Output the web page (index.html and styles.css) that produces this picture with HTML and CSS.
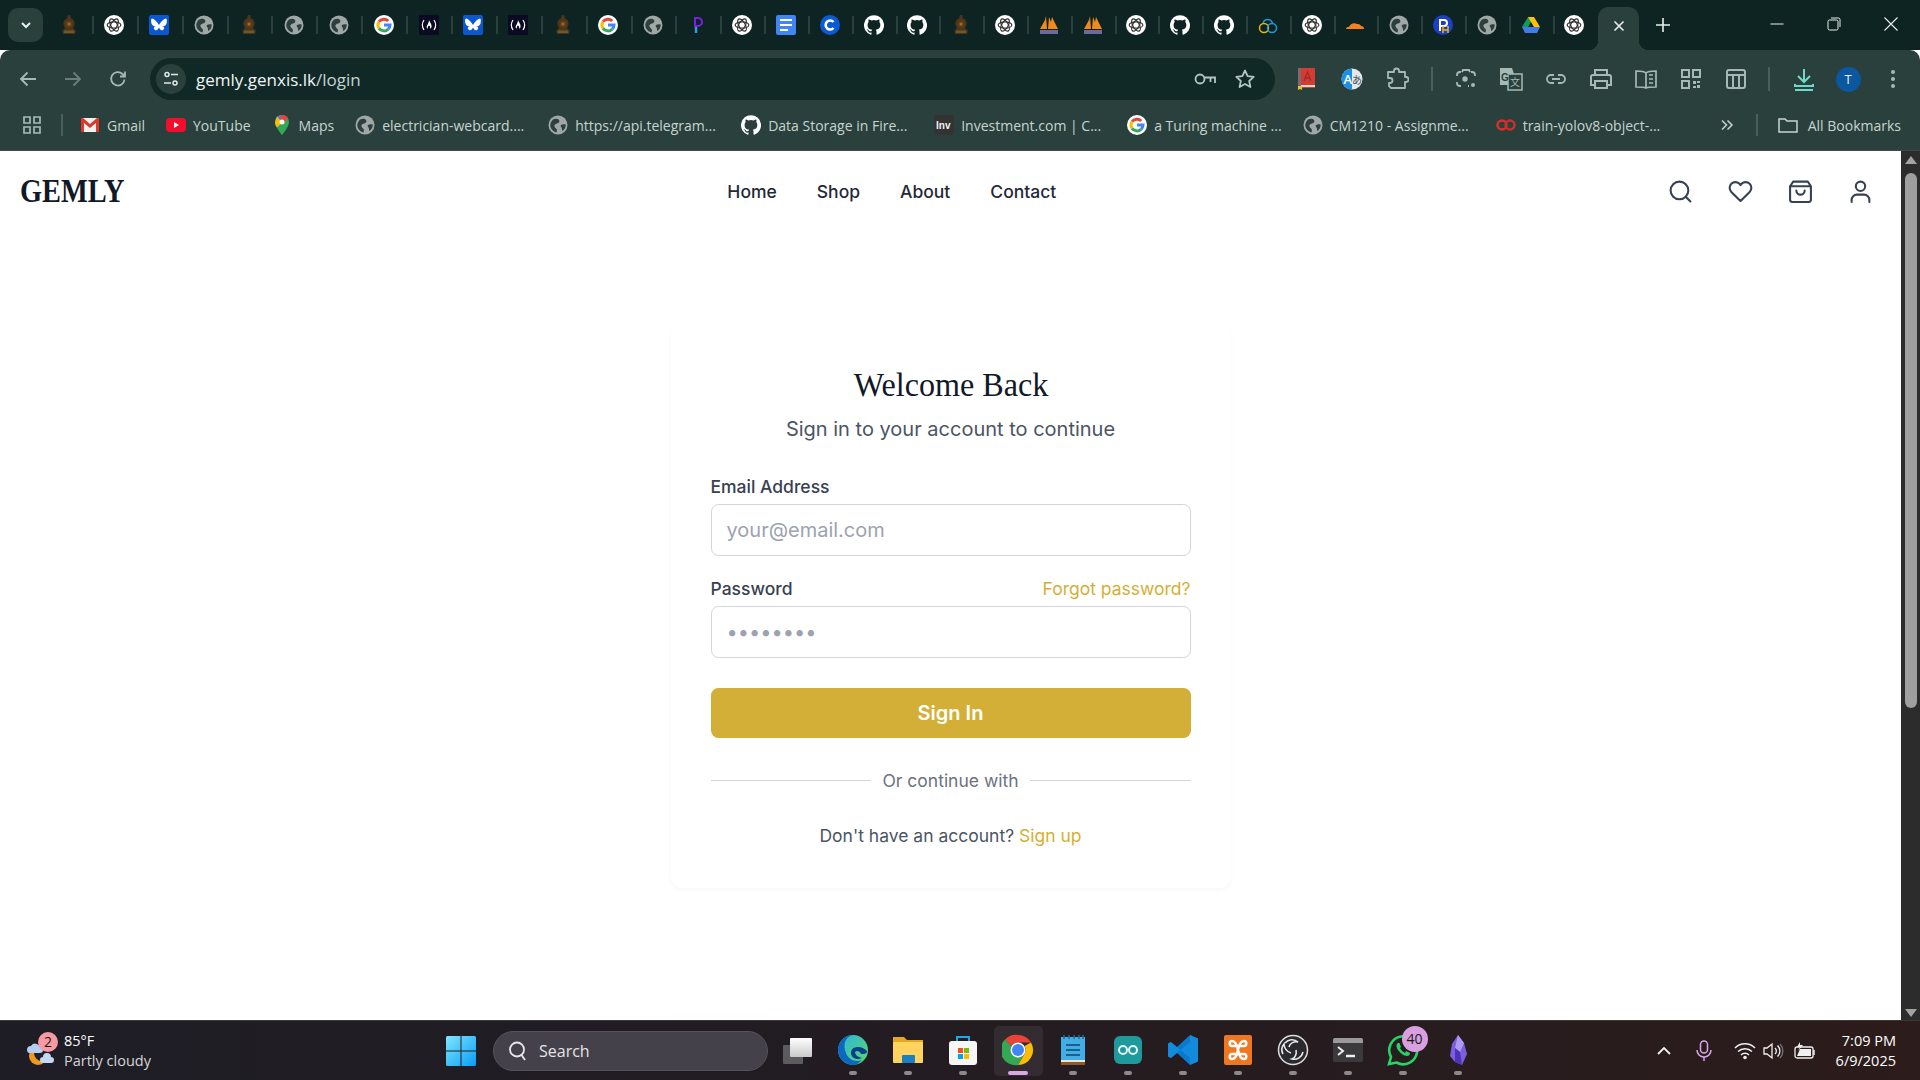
FILE: index.html
```html
<!DOCTYPE html>
<html lang="en">

<head>
    <meta charset="UTF-8">
    <meta name="viewport" content="width=device-width, initial-scale=1.0">
    <title>Gemly - Login</title>
    <link rel="stylesheet" href="styles.css">
</head>

<body>
    <!-- shared favicons -->
    <svg class="sprites" aria-hidden="true">
        <symbol id="f-globe" viewBox="0 0 20 20">
            <circle cx="10" cy="10" r="9.500" fill="#a0a7a7" />
            <path d="M5 4.500c2-1 5-1 6 .5s0 3-2 3.500-3 1.500-2.500 3 2 2 2.500 3.500l-.5 2.500C5 16.500 2.500 13.500 2.300 10.500 2.200 8 3.500 6 5 4.500zM13 10c1-.8 3-1 4.700-.6.2 2.500-1 5-3.500 6.600-.3-1.500 0-2.500-.7-3.500s-1.200-1.800-.5-2.500z" fill="#2d3f3f" />
        </symbol>
        <symbol id="f-gpt" viewBox="0 0 20 20">
            <circle cx="10" cy="10" r="10" fill="#fff" />
            <g fill="none" stroke="#333" stroke-width="1.200">
                <ellipse cx="10" cy="10" rx="6.800" ry="3.200" />
                <ellipse cx="10" cy="10" rx="6.800" ry="3.200" transform="rotate(60 10 10)" />
                <ellipse cx="10" cy="10" rx="6.800" ry="3.200" transform="rotate(120 10 10)" />
            </g>
        </symbol>
        <symbol id="f-kite" viewBox="0 0 20 20">
            <rect width="20" height="20" rx="2" fill="#0b57d0" />
            <path d="M3 3.500c2 0 5 3 7 6.500 2-3.500 5-6.500 7-6.500 1 0 1 3 .5 5-.5 2-2.500 3-4.500 2.500 2 .5 3 2 1.500 3.500-2 2-3.500 0-4.500-2-1 2-2.500 4-4.500 2-1.500-1.500-.5-3 1.500-3.500-2 .5-4-.5-4.500-2.500-.5-2-.5-5 .5-5z" fill="#fff" />
        </symbol>
        <symbol id="f-emblem" viewBox="0 0 20 20">
            <path d="M10 0c1.500 0 2 1.500 1.500 3 3 1 4.500 4 4 7l-1.500 3 3 3-1 3H4l-1-3 3-3-1.500-3C4 7 5.500 4 8.500 3 8 1.500 8.500 0 10 0z" fill="#4a361c" />
            <circle cx="10" cy="9" r="3.500" fill="#5e3d18" />
            <circle cx="10" cy="9" r="1.500" fill="#a8691f" />
            <path d="M5 15.500h10V18H5z" fill="#6d5a26" />
        </symbol>
        <symbol id="f-google" viewBox="0 0 20 20">
            <circle cx="10" cy="10" r="10" fill="#fff" />
            <g fill="none" stroke-width="3">
                <path d="M14.200 6A6 6 0 0 0 5 6.700" stroke="#ea4335" />
                <path d="M5 6.700a6 6 0 0 0 0 6.600" stroke="#fbbc05" />
                <path d="M5 13.300a6 6 0 0 0 9 1" stroke="#34a853" />
                <path d="M14 14.300a6 6 0 0 0 2-4.300h-6" stroke="#4285f4" />
            </g>
        </symbol>
        <symbol id="f-fcc" viewBox="0 0 20 20">
            <rect width="20" height="20" fill="#0a0a23" />
            <g fill="none" stroke="#fff" stroke-width="1.200">
                <path d="M5 5c-2 3-2 7 0 10M15 5c2 3 2 7 0 10" />
            </g>
            <path d="M10 5c.5 2 3 4 2.500 7-.3 1-1 1.500-1.500 1.500.5-1 0-2.500-1-3-1 .5-1.500 2-1 3-.7 0-1.400-.7-1.500-1.500C8 10 10 8 10 5z" fill="#fff" />
        </symbol>
        <symbol id="f-github" viewBox="0 0 24 24">
            <path d="M12 .3a12 12 0 0 0-3.800 23.400c.6.1.8-.3.8-.6v-2c-3.300.7-4-1.600-4-1.600-.6-1.400-1.400-1.800-1.400-1.800-1-.7.1-.7.1-.7 1.200 0 1.900 1.200 1.900 1.200 1 1.800 2.800 1.300 3.500 1 0-.8.4-1.300.7-1.600-2.700-.3-5.500-1.300-5.500-6 0-1.200.5-2.300 1.300-3.100-.2-.4-.6-1.600 0-3.200 0 0 1-.3 3.400 1.200a11.500 11.500 0 0 1 6 0c2.300-1.500 3.300-1.200 3.300-1.200.6 1.600.2 2.800 0 3.200.9.8 1.300 1.900 1.300 3.200 0 4.600-2.800 5.600-5.500 5.900.5.4.9 1 .9 2.200v3.300c0 .3.1.7.8.6A12 12 0 0 0 12 .3" fill="#fff" />
        </symbol>
        <symbol id="f-purple" viewBox="0 0 20 20">
            <path d="M7 3h3a3.500 3.500 0 0 1 0 8H7z" fill="none" stroke="#7c1fe0" stroke-width="2" />
            <path d="M8 12v6" stroke="#2a9fd8" stroke-width="2.500" />
        </symbol>
        <symbol id="f-docs" viewBox="0 0 20 20">
            <rect width="20" height="20" rx="2" fill="#4285f4" />
            <path d="M4 5h12M4 10h12M4 15h8" stroke="#fff" stroke-width="2" />
        </symbol>
        <symbol id="f-c" viewBox="0 0 20 20">
            <circle cx="10" cy="10" r="10" fill="#0b5ad4" />
            <path d="M13.500 7A4.500 4.500 0 1 0 13.500 13" fill="none" stroke="#fff" stroke-width="2.600" />
        </symbol>
        <symbol id="f-pma" viewBox="0 0 20 20">
            <path d="M1 14 6 5l1-4 1 13zM9 14l1-12 2 5 1-5 6 12z" fill="#f08a1d" />
            <path d="M1 15h18v4H1z" fill="#6c6a9a" />
        </symbol>
        <symbol id="f-cloud" viewBox="0 0 20 20">
            <circle cx="6" cy="13" r="4.500" fill="none" stroke="#f5b400" stroke-width="1.500" />
            <circle cx="14" cy="13" r="4.500" fill="none" stroke="#1d9be0" stroke-width="1.500" />
            <path d="M5 8a5 5 0 0 1 9.500 0" fill="none" stroke="#1d9be0" stroke-width="1.500" />
        </symbol>
        <symbol id="f-flare" viewBox="0 0 20 20">
            <path d="M1 14c0-2 2-2 3-2 1-3 5-5 8-3 1 0 3 0 4 2 2 0 3 1 3 3z" fill="#f48120" />
        </symbol>
        <symbol id="f-ph" viewBox="0 0 20 20">
            <circle cx="10" cy="10" r="10" fill="#1c3fc4" />
            <path d="M7 16V5h4a3 3 0 0 1 0 6H7" fill="none" stroke="#fff" stroke-width="2" />
            <path d="M10 11v7M15 11v7M10 15h5" stroke="#f5b400" stroke-width="1.500" />
        </symbol>
        <symbol id="f-drive" viewBox="0 0 20 20">
            <path d="M7 2h6L7 12H1z" fill="#0f9d58" />
            <path d="M13 2l6 10h-6L7 2z" fill="#ffc107" />
            <path d="M1 12h18l-3 6H4z" fill="#3f7ee8" />
        </symbol>
    </svg>

    <div class="tabstrip">
        <button class="tab-menu">
            <svg width="14" height="14" viewBox="0 0 14 14"><path d="M3 5l4 4 4-4" fill="none" stroke="#e8f0ee" stroke-width="2" /></svg>
        </button>
        <div class="tabs">
            <div class="tab tab-first"><svg class="fav"><use href="#f-emblem" /></svg></div>
            <div class="tab"><svg class="fav"><use href="#f-gpt" /></svg></div>
            <div class="tab"><svg class="fav"><use href="#f-kite" /></svg></div>
            <div class="tab"><svg class="fav"><use href="#f-globe" /></svg></div>
            <div class="tab"><svg class="fav"><use href="#f-emblem" /></svg></div>
            <div class="tab"><svg class="fav"><use href="#f-globe" /></svg></div>
            <div class="tab"><svg class="fav"><use href="#f-globe" /></svg></div>
            <div class="tab"><svg class="fav"><use href="#f-google" /></svg></div>
            <div class="tab"><svg class="fav"><use href="#f-fcc" /></svg></div>
            <div class="tab"><svg class="fav"><use href="#f-kite" /></svg></div>
            <div class="tab"><svg class="fav"><use href="#f-fcc" /></svg></div>
            <div class="tab"><svg class="fav"><use href="#f-emblem" /></svg></div>
            <div class="tab"><svg class="fav"><use href="#f-google" /></svg></div>
            <div class="tab"><svg class="fav"><use href="#f-globe" /></svg></div>
            <div class="tab"><svg class="fav"><use href="#f-purple" /></svg></div>
            <div class="tab"><svg class="fav"><use href="#f-gpt" /></svg></div>
            <div class="tab"><svg class="fav"><use href="#f-docs" /></svg></div>
            <div class="tab"><svg class="fav"><use href="#f-c" /></svg></div>
            <div class="tab"><svg class="fav"><use href="#f-github" /></svg></div>
            <div class="tab"><svg class="fav"><use href="#f-github" /></svg></div>
            <div class="tab"><svg class="fav"><use href="#f-emblem" /></svg></div>
            <div class="tab"><svg class="fav"><use href="#f-gpt" /></svg></div>
            <div class="tab"><svg class="fav"><use href="#f-pma" /></svg></div>
            <div class="tab"><svg class="fav"><use href="#f-pma" /></svg></div>
            <div class="tab"><svg class="fav"><use href="#f-gpt" /></svg></div>
            <div class="tab"><svg class="fav"><use href="#f-github" /></svg></div>
            <div class="tab"><svg class="fav"><use href="#f-github" /></svg></div>
            <div class="tab"><svg class="fav"><use href="#f-cloud" /></svg></div>
            <div class="tab"><svg class="fav"><use href="#f-gpt" /></svg></div>
            <div class="tab"><svg class="fav"><use href="#f-flare" /></svg></div>
            <div class="tab"><svg class="fav"><use href="#f-globe" /></svg></div>
            <div class="tab"><svg class="fav"><use href="#f-ph" /></svg></div>
            <div class="tab"><svg class="fav"><use href="#f-globe" /></svg></div>
            <div class="tab"><svg class="fav"><use href="#f-drive" /></svg></div>
            <div class="tab"><svg class="fav"><use href="#f-gpt" /></svg></div>
            <div class="tab-active">
                <svg width="14" height="14" viewBox="0 0 14 14"><path d="M2.500 2.500l9 9M11.500 2.500l-9 9" stroke="#e8f0ee" stroke-width="1.600" /></svg>
            </div>
            <div class="tab-new">
                <svg width="16" height="16" viewBox="0 0 16 16"><path d="M8 1v14M1 8h14" stroke="#e8f0ee" stroke-width="1.600" /></svg>
            </div>
        </div>
        <div class="win-controls">
            <svg width="16" height="16" viewBox="0 0 16 16"><path d="M1.500 8h13" stroke="#e8f0ee" stroke-width="1" /></svg>
            <svg width="16" height="16" viewBox="0 0 16 16"><rect x="2" y="4" width="10" height="10" rx="1.500" fill="none" stroke="#e8f0ee" /><path d="M5 2h7.500A1.500 1.500 0 0 1 14 3.500V11" fill="none" stroke="#e8f0ee" /></svg>
            <svg width="16" height="16" viewBox="0 0 16 16"><path d="M1.500 1.500l13 13M14.500 1.500l-13 13" stroke="#e8f0ee" stroke-width="1.100" /></svg>
        </div>
    </div>

    <div class="toolbar">
        <div class="nav-row">
            <span class="tool"><svg width="20" height="20" viewBox="0 0 20 20"><path d="M18 10H3M9.500 3.500 3 10l6.500 6.500" fill="none" stroke="currentColor" stroke-width="1.800" /></svg></span>
            <span class="tool tool-off"><svg width="20" height="20" viewBox="0 0 20 20"><path d="M2 10h15M10.500 3.500 17 10l-6.500 6.500" fill="none" stroke="currentColor" stroke-width="1.800" /></svg></span>
            <span class="tool"><svg width="20" height="20" viewBox="0 0 20 20"><path d="M16.500 10.500A6.700 6.700 0 1 1 14.500 5L17 7.500M17 2.500v5h-5" fill="none" stroke="currentColor" stroke-width="1.800" /></svg></span>
            <div class="address">
                <span class="site-info">
                    <svg width="18" height="18" viewBox="0 0 18 18"><circle cx="5" cy="4.500" r="2" fill="none" stroke="#dfe9e6" stroke-width="1.500" /><path d="M9 4.500h7M2 13h7" stroke="#dfe9e6" stroke-width="1.500" /><circle cx="13" cy="13" r="2" fill="none" stroke="#dfe9e6" stroke-width="1.500" /></svg>
                </span>
                <span class="url">gemly.genxis.lk<span class="url-path">/login</span></span>
                <span class="address-icons">
                    <svg width="24" height="24" viewBox="0 0 24 24"><circle cx="7" cy="12" r="4.500" fill="none" stroke="currentColor" stroke-width="1.800" /><path d="M11.500 10.500H22V16M17.500 10.500V15" fill="none" stroke="currentColor" stroke-width="1.800" /></svg>
                    <svg width="24" height="24" viewBox="0 0 24 24"><path d="m12 3.500 2.600 5.600 6.100.7-4.500 4.200 1.200 6L12 17l-5.400 3 1.200-6-4.500-4.200 6.100-.7z" fill="none" stroke="currentColor" stroke-width="1.800" stroke-linejoin="round" /></svg>
                </span>
            </div>
            <span class="tool tool-first"><svg width="24" height="24" viewBox="0 0 24 24"><rect x="3" y="1" width="17" height="20" fill="#d23c35" /><rect x="3" y="1" width="3" height="20" fill="#7d6b6b" /><path d="M6 18h14v2H6z" fill="#e6dcc8" /><path d="M3 19h4v4l-2-1-2 1z" fill="#e8c22c" /><path d="M9 14l3.500-9 3.500 9M10.200 11h4.600" fill="none" stroke="#a02a25" stroke-width="1.300" /></svg></span>
            <span class="tool"><svg width="24" height="24" viewBox="0 0 24 24"><circle cx="12" cy="12" r="10.500" fill="#e4e8e8" /><path d="M12 1.500a10.500 10.500 0 0 0 0 21z" fill="#1a8fe8" /><text x="3.500" y="17" class="glyph-a">A</text><text x="12" y="17" class="glyph-j">あ</text></svg></span>
            <span class="tool"><svg width="24" height="24" viewBox="0 0 24 24"><path d="M3 5h6V4a2.500 2.500 0 0 1 5 0v1h6v5h1a2.500 2.500 0 0 1 0 5h-1v6H6l-2-2v-3h1a2.500 2.500 0 0 0 0-5H3z" fill="none" stroke="currentColor" stroke-width="1.800" stroke-linejoin="round" /></svg></span>
            <span class="tool-sep"></span>
            <span class="tool"><svg width="24" height="24" viewBox="0 0 24 24"><path d="M7 5H6a3 3 0 0 0-3 3v1M3 15v1a3 3 0 0 0 3 3h1M17 5h1a3 3 0 0 1 3 3v1M14 19h1M8 5l1-2h6l1 2" fill="none" stroke="currentColor" stroke-width="1.800" /><circle cx="11" cy="12" r="2.700" fill="currentColor" /><circle cx="19" cy="18" r="2" fill="currentColor" /></svg></span>
            <span class="tool"><svg width="24" height="24" viewBox="0 0 24 24"><path d="M1 1h12l2 6v11H1z" fill="currentColor" /><rect x="9" y="7" width="14" height="16" fill="#2a403c" stroke="currentColor" stroke-width="1.500" /><text x="2" y="14" class="glyph-g">G</text><text x="11" y="19" class="glyph-t">文</text></svg></span>
            <span class="tool"><svg width="24" height="24" viewBox="0 0 24 24"><path d="M10 8H7a4 4 0 0 0 0 8h3M14 8h3a4 4 0 0 1 0 8h-3M8 12h8" fill="none" stroke="currentColor" stroke-width="1.800" /></svg></span>
            <span class="tool"><svg width="24" height="24" viewBox="0 0 24 24"><path d="M6 8V3h12v5M6 18H2v-8a2 2 0 0 1 2-2h16a2 2 0 0 1 2 2v8h-4M6 14h12v7H6z" fill="none" stroke="currentColor" stroke-width="2" /></svg></span>
            <span class="tool"><svg width="24" height="24" viewBox="0 0 24 24"><path d="M12 6c-2-2-5-2-10-2v16c5 0 8 0 10 1 2-1 5-1 10-1V4c-5 0-8 0-10 2zM12 6v15M15 8h4M15 12h4M15 16h4" fill="none" stroke="currentColor" stroke-width="1.700" /></svg></span>
            <span class="tool"><svg width="24" height="24" viewBox="0 0 24 24"><path d="M3 3h7v7H3zM14 3h7v7h-7zM3 14h7v7H3z" fill="none" stroke="currentColor" stroke-width="2" /><path d="M14 14h3v3h-3zM18 18h3v3h-3zM18 14h3v2h-3zM14 19h3v2h-3z" fill="currentColor" /></svg></span>
            <span class="tool"><svg width="24" height="24" viewBox="0 0 24 24"><rect x="3" y="3" width="18" height="18" rx="2" fill="none" stroke="currentColor" stroke-width="2" /><path d="M3 8h18M9 8v13M15 8v13" fill="none" stroke="currentColor" stroke-width="2" /></svg></span>
            <span class="tool-sep tool-sep-last"></span>
            <span class="tool tool-dl"><svg width="24" height="24" viewBox="0 0 24 24"><path d="M12 2v12M6 9l6 6 6-6M3 17v2h18v-2" fill="none" stroke="currentColor" stroke-width="2" /><path d="M3 23h18" stroke="currentColor" stroke-width="2" /></svg></span>
            <span class="tool"><span class="avatar">T</span></span>
            <span class="tool"><svg width="24" height="24" viewBox="0 0 24 24"><circle cx="12" cy="5" r="2" fill="currentColor" /><circle cx="12" cy="12" r="2" fill="currentColor" /><circle cx="12" cy="19" r="2" fill="currentColor" /></svg></span>
        </div>

        <div class="bookmarks">
            <span class="apps-btn"><svg width="20" height="20" viewBox="0 0 20 20"><path d="M2 2h6v6H2zM12 2h6v6h-6zM2 12h6v6H2zM12 12h6v6h-6z" fill="none" stroke="currentColor" stroke-width="1.700" /></svg></span>
            <span class="bm-sep"></span>
            <a class="bm"><svg class="fav" viewBox="0 0 20 20"><rect x="1" y="3" width="18" height="14" fill="#f4f0ee" /><path d="M1 3v14h3V8l6 5 6-5v9h3V3h-2l-7 6-7-6z" fill="#d93a2c" /></svg>Gmail</a>
            <a class="bm"><svg class="fav" viewBox="0 0 20 20"><rect y="3" width="20" height="14" rx="4" fill="#f40d2c" /><path d="M8 7l5 3-5 3z" fill="#fff" /></svg>YouTube</a>
            <a class="bm"><svg class="fav" viewBox="0 0 20 20"><path d="M10 0a7 7 0 0 0-7 7c0 5 7 13 7 13s7-8 7-13a7 7 0 0 0-7-7z" fill="#34a853" /><path d="M10 0a7 7 0 0 1 6 3.500L5 12.500C4 11 3 9 3 7a7 7 0 0 1 7-7z" fill="#4285f4" /><path d="M5 1.500 3 7c0 2 1 4 2 5.500l5-5z" fill="#fbbc05" /><path d="M10 0c2 0 5 1 6 3.500L12 7 7 2z" fill="#ea4335" /><circle cx="10" cy="7" r="2.500" fill="#fff" /></svg>Maps</a>
            <a class="bm bm-long"><svg class="fav"><use href="#f-globe" /></svg>electrician-webcard....</a>
            <a class="bm bm-long"><svg class="fav"><use href="#f-globe" /></svg>https://api.telegram...</a>
            <a class="bm bm-long"><svg class="fav"><use href="#f-github" /></svg>Data Storage in Fire...</a>
            <a class="bm bm-long"><svg class="fav" viewBox="0 0 20 20"><rect width="20" height="20" fill="#333" /><text x="2" y="14" class="glyph-inv">Inv</text></svg>Investment.com | C...</a>
            <a class="bm"><svg class="fav"><use href="#f-google" /></svg>a Turing machine ...</a>
            <a class="bm bm-long"><svg class="fav"><use href="#f-globe" /></svg>CM1210 - Assignme...</a>
            <a class="bm bm-long"><svg class="fav" viewBox="0 0 20 20"><circle cx="6" cy="10" r="4.500" fill="none" stroke="#d9302a" stroke-width="2.500" /><circle cx="14" cy="10" r="4.500" fill="none" stroke="#c9302a" stroke-width="2.500" /></svg>train-yolov8-object-...</a>
            <span class="bm-more">
                <svg width="14" height="14" viewBox="0 0 14 14"><path d="M2 2.500 6.500 7 2 11.500M7.500 2.500 12 7l-4.500 4.500" fill="none" stroke="currentColor" stroke-width="1.500" /></svg>
            </span>
            <span class="bm-sep bm-sep-end"></span>
            <a class="bm bm-all"><svg class="fav" viewBox="0 0 20 20"><path d="M1 4h6l2 2h10v11H1z" fill="none" stroke="currentColor" stroke-width="1.500" /></svg>All Bookmarks</a>
        </div>
    </div>

    <div class="viewport">
        <div class="site">
            <header class="site-header">
                <a class="logo">GEMLY</a>
                <nav class="site-nav">
                    <a>Home</a>
                    <a>Shop</a>
                    <a>About</a>
                    <a>Contact</a>
                </nav>
                <div class="site-icons">
                    <svg viewBox="0 0 24 24"><circle cx="11" cy="11" r="8.500" /><path d="m21.500 21.500-4.500-4.500" /></svg>
                    <svg viewBox="0 0 24 24"><path d="M20.800 4.600a5.500 5.500 0 0 0-7.800 0L12 5.700l-1-1.100a5.500 5.500 0 0 0-7.800 7.800L12 21.200l8.800-8.800a5.500 5.500 0 0 0 0-7.800z" /></svg>
                    <svg viewBox="0 0 24 24"><path d="M5 2.500h14L22 7v13a2 2 0 0 1-2 2H4a2 2 0 0 1-2-2V7zM2 7h20M16 11a4 4 0 0 1-8 0" /></svg>
                    <svg viewBox="0 0 24 24"><circle cx="12" cy="7" r="4.500" /><path d="M3.500 22v-2a5 5 0 0 1 5-5h7a5 5 0 0 1 5 5v2" /></svg>
                </div>
            </header>

            <main class="login-card">
                <h1 class="login-title">Welcome Back</h1>
                <p class="login-sub">Sign in to your account to continue</p>

                <label class="field-label" for="email">Email Address</label>
                <input class="field-input" type="email" id="email" placeholder="your@email.com">

                <div class="label-row">
                    <label class="field-label" for="password">Password</label>
                    <a class="gold-link">Forgot password?</a>
                </div>
                <input class="field-input field-pass" type="password" id="password" placeholder="••••••••">

                <button class="signin-btn">Sign In</button>

                <div class="divider"><span>Or continue with</span></div>

                <p class="signup-line">Don't have an account? <a class="gold-link">Sign up</a></p>
            </main>
        </div>
        <div class="scrollbar">
            <svg width="18" height="14" viewBox="0 0 18 14"><path d="M9 3l6 8H3z" fill="#a3a3a3" /></svg>
            <div class="scroll-thumb"></div>
            <svg class="scroll-down" width="18" height="14" viewBox="0 0 18 14"><path d="M9 11l6-8H3z" fill="#a3a3a3" /></svg>
        </div>
    </div>

    <div class="taskbar">
        <div class="weather">
            <span class="weather-icon">
                <svg width="36" height="36" viewBox="0 0 36 36"><circle cx="15" cy="23" r="9" fill="#ef9a1e" /><circle cx="19" cy="20" r="8" fill="#211f27" /><path d="M4 17a4 4 0 0 1 4-4 5 5 0 0 1 9 1 3 3 0 0 1 0 6H6a3 3 0 0 1-2-3z" fill="#b5cdf2" /><path d="M17 27a3 3 0 0 1 3-3 4 4 0 0 1 8 0 3 3 0 0 1 0 6h-9a3 3 0 0 1-2-3z" fill="#c4d7f5" /></svg>
                <span class="weather-badge">2</span>
            </span>
            <div class="weather-text">
                <span class="weather-temp">85°F</span>
                <span class="weather-desc">Partly cloudy</span>
            </div>
        </div>
        <svg class="start" width="30" height="30" viewBox="0 0 30 30">
            <defs>
                <linearGradient id="win" x1="0" y1="0" x2="1" y2="1"><stop offset="0" stop-color="#7fe6ff" /><stop offset="1" stop-color="#0a9cf5" /></linearGradient>
            </defs>
            <path d="M0 1.500A1.500 1.500 0 0 1 1.500 0h13v14.500H0zM15.500 0h13A1.500 1.500 0 0 1 30 1.500v13H15.500zM0 15.500h14.500V30h-13A1.500 1.500 0 0 1 0 28.500zM15.500 15.500H30v13a1.500 1.500 0 0 1-1.500 1.500h-13z" fill="url(#win)" />
        </svg>
        <div class="task-search">
            <svg width="22" height="22" viewBox="0 0 22 22"><circle cx="10" cy="9.500" r="7" fill="none" stroke="#e8e8ea" stroke-width="1.800" /><path d="m14.500 15 3.500 5" stroke="#e8e8ea" stroke-width="1.800" /></svg>
            <span>Search</span>
        </div>
        <div class="task-apps">
            <div class="app">
                <svg viewBox="0 0 32 32"><defs><linearGradient id="stack" x1="0" y1="0" x2="0" y2="1"><stop offset="0" stop-color="#ffffff" /><stop offset="1" stop-color="#c9c9c9" /></linearGradient></defs><rect x="1" y="11" width="20" height="19" rx="1" fill="#5c5c5e" /><rect x="8" y="4" width="22" height="19" rx="1" fill="url(#stack)" /></svg>
            </div>
            <div class="app app-open">
                <svg viewBox="0 0 32 32"><defs><linearGradient id="edge" x1="0" y1="0" x2="1" y2="1"><stop offset="0" stop-color="#2fb4e0" /><stop offset="1" stop-color="#58d86a" /></linearGradient></defs><circle cx="16" cy="16" r="15" fill="url(#edge)" /><path d="M1 16C1 8 8 1 16 1c-9 2-10 11-7 18 2 6 9 10 16 7-3 3-6 5-9 5C8 31 1 24 1 16z" fill="#0c67c0" /><path d="M14 19c0-4 3-6 7-6 4 0 7 2 9 4 0 3-3 3-6 3-1-3-4-4-6-2 0 3 3 5 7 6-6 3-11-1-11-5z" fill="#0a3f86" /></svg>
            </div>
            <div class="app app-open">
                <svg viewBox="0 0 32 32"><path d="M1 3h11l3 3h16v22H1z" fill="#e5a823" /><rect x="1" y="8" width="30" height="21" rx="1" fill="#ffd45e" /><rect x="10" y="21" width="13" height="8" rx="1" fill="#1b7fc4" /></svg>
            </div>
            <div class="app app-open">
                <svg viewBox="0 0 32 32"><path d="M10 8V3h12v5" fill="none" stroke="#1ea7e8" stroke-width="2" /><rect x="2" y="7" width="28" height="24" rx="3" fill="#f6f6f6" /><path d="M11 14h5v5h-5z" fill="#f25022" /><path d="M17 14h5v5h-5z" fill="#7fba00" /><path d="M11 20h5v5h-5z" fill="#00a4ef" /><path d="M17 20h5v5h-5z" fill="#ffb900" /></svg>
            </div>
            <div class="app app-active">
                <svg viewBox="0 0 32 32"><path d="M16 1a15 15 0 0 1 13 7.500H16a7.500 7.500 0 0 0-6.500 3.800L3 5.500A15 15 0 0 1 16 1z" fill="#ea4335" /><path d="M29 8.500A15 15 0 0 1 16 31l6.500-11.300A7.500 7.500 0 0 0 22.500 12z" fill="#fbbc05" /><path d="M3 5.500 9.500 12.300a7.500 7.500 0 0 0 13 7.400L16 31A15 15 0 0 1 3 5.500z" fill="#34a853" /><circle cx="16" cy="16" r="7.500" fill="#fff" /><circle cx="16" cy="16" r="6" fill="#4285f4" /></svg>
            </div>
            <div class="app app-open">
                <svg viewBox="0 0 32 32"><rect x="4" y="3" width="24" height="28" fill="#43aee6" /><path d="M4 27h24v4H4z" fill="#8a5a2a" /><path d="M4 26h24v2H4z" fill="#f0e6d0" /><path d="M9 11h14M9 16h14M9 21h14" stroke="#1c5f8c" stroke-width="2" /><path d="M7 1v4M12 1v4M17 1v4M22 1v4M26 1v4" stroke="#1b6e9e" stroke-width="1.500" /></svg>
            </div>
            <div class="app app-open">
                <svg viewBox="0 0 32 32"><rect x="2" y="2" width="28" height="28" rx="6" fill="#1f9a9c" /><g fill="none" stroke="#e6f3f3" stroke-width="2"><circle cx="11" cy="16" r="4" /><circle cx="21" cy="16" r="4" /></g></svg>
            </div>
            <div class="app app-open">
                <svg viewBox="0 0 32 32"><path d="M23 1 31 4.500v23L23 31 10 19l-6 5-3-1.500V9.500L4 8l6 5z" fill="#0a78cc" /><path d="M23 1 31 4.500v23L23 31zM4 8 23 24V8L4 24 1 22.500V9.500z" fill="#1a9bea" opacity=".55" /></svg>
            </div>
            <div class="app app-open">
                <svg viewBox="0 0 32 32"><rect x="2" y="1" width="28" height="30" rx="2" fill="#f0771f" /><path d="M10 7c-3 0-3 5 0 5h12c3 0 3-5 0-5-3 0-5 4-6 9-1 5-3 9-6 9s-3-5 0-5h12c3 0 3 5 0 5-3 0-5-4-6-9-1-5-3-9-6-9z" fill="none" stroke="#fff" stroke-width="2.500" /></svg>
            </div>
            <div class="app app-open">
                <svg viewBox="0 0 32 32"><circle cx="16" cy="16" r="14.500" fill="#2a2a2e" stroke="#ddd" stroke-width="1.500" /><g fill="none" stroke="#e8e8e8" stroke-width="1.600"><path d="M8 9a9 9 0 0 1 13-1c-4-1-8 1-9 5" /><path d="M26 18a9 9 0 0 1-11 7c3-1 5-5 4-9" /><path d="M6 20a9 9 0 0 1 1-10c0 4 3 8 7 9" /></g></svg>
            </div>
            <div class="app app-open">
                <svg viewBox="0 0 32 32"><rect x="1" y="4" width="30" height="24" rx="2" fill="#3a3a3c" /><path d="M1 6a2 2 0 0 1 2-2h26a2 2 0 0 1 2 2v3H1z" fill="#9a9a9c" /><path d="M6 13l5 4-5 4" fill="none" stroke="#eee" stroke-width="2" /><path d="M14 22h9" stroke="#eee" stroke-width="2.500" /></svg>
            </div>
            <div class="app app-open">
                <svg viewBox="0 0 32 32"><path d="M2 30l2-7A14 14 0 1 1 9.500 28.500z" fill="none" stroke="#25d366" stroke-width="2.600" /><path d="M11 9c-2 1-2 4 0 7s6 6 9 6c2 0 3-2 3-3l-4-2-1 2c-2-1-4-3-5-5l1-1-1.500-4z" fill="#25d366" /></svg>
                <span class="app-badge">40</span>
            </div>
            <div class="app app-open">
                <svg viewBox="0 0 32 32"><path d="M16 1l6 8 3 11-5 11-7-3-5-6 2-12z" fill="#7c5fe0" /><path d="M16 1l6 8-4 9-5-4z" fill="#b09af0" /><path d="M13 14l5 4 2 13-7-3z" fill="#4e33b8" /></svg>
            </div>
        </div>
        <div class="tray">
            <svg class="tray-up" width="16" height="16" viewBox="0 0 16 16"><path d="M2 11l6-6 6 6" fill="none" stroke="#f0f0f0" stroke-width="1.800" /></svg>
            <svg class="tray-mic" width="20" height="22" viewBox="0 0 20 22"><rect x="6.500" y="1" width="7" height="12" rx="3.500" fill="none" stroke="#d9a6e6" stroke-width="1.500" /><path d="M3 10a7 7 0 0 0 14 0M10 17v4" fill="none" stroke="#d9a6e6" stroke-width="1.500" /></svg>
            <svg class="tray-wifi" width="22" height="18" viewBox="0 0 22 18"><g fill="none" stroke="#f0f0f0" stroke-width="1.500"><path d="M1 6a14 14 0 0 1 20 0" /><path d="M4 9.500a10 10 0 0 1 14 0" /><path d="M7 13a5.500 5.500 0 0 1 8 0" /></g><circle cx="11" cy="15.500" r="1.800" fill="#f0f0f0" /></svg>
            <svg class="tray-vol" width="22" height="18" viewBox="0 0 22 18"><path d="M1 6h3l5-4v14l-5-4H1z" fill="none" stroke="#f0f0f0" stroke-width="1.300" /><path d="M12 6a4 4 0 0 1 0 6M14.500 3.500a7.500 7.500 0 0 1 0 11" fill="none" stroke="#f0f0f0" stroke-width="1.300" /><path d="M17 2a10 10 0 0 1 0 14" fill="none" stroke="#777" stroke-width="1.300" /></svg>
            <svg class="tray-bat" width="22" height="18" viewBox="0 0 22 18"><rect x="1" y="5" width="18" height="11" rx="2" fill="none" stroke="#f0f0f0" stroke-width="1.300" /><path d="M20 8v5" stroke="#f0f0f0" stroke-width="1.500" /><path d="M3 14l3-7h11v7z" fill="#f0f0f0" /><path d="M6 0 3 5h3l-2 4 5-6H6z" fill="#f0f0f0" /></svg>
            <div class="clock">
                <span>7:09 PM</span>
                <span>6/9/2025</span>
            </div>
        </div>
    </div>
</body>

</html>
```

FILE: styles.css
```css
* {
    box-sizing: border-box;
}

body {
    margin: 0;
    height: 1080px;
    overflow: hidden;
    display: flex;
    flex-direction: column;
    font-family: "Open Sans", "Noto Sans", sans-serif;
    background-color: #fff;
}

.sprites {
    display: none;
}

.fav {
    width: 20px;
    height: 20px;
    flex: none;
}

/* tab strip */
.tabstrip {
    height: 50px;
    flex: none;
    display: flex;
    background-color: #0d2422;
}

.tab-menu {
    width: 35px;
    height: 34px;
    margin: 8px 4px 0 8px;
    padding: 0;
    border: none;
    border-radius: 10px;
    background-color: #2a403c;
    display: flex;
    align-items: center;
    justify-content: center;
}

.tabs {
    display: flex;
}

.tab {
    width: 43.8px;
    height: 50px;
    display: flex;
    align-items: center;
    justify-content: center;
    background: linear-gradient(#2a403c, #2a403c) left center / 2px 18px no-repeat;
}

.tab:nth-child(-n+15) {
    width: 44.9px;
}

.tab-first {
    background: none;
}

.tab-active {
    position: relative;
    width: 41px;
    height: 43px;
    margin: 7px 1.650px 0 2px;
    border-radius: 10px 10px 0 0;
    background-color: #2a403c;
    display: flex;
    align-items: center;
    justify-content: center;
    padding-bottom: 6px;
}

.tab-active::before,
.tab-active::after {
    content: "";
    position: absolute;
    bottom: 0;
    width: 10px;
    height: 10px;
}

.tab-active::before {
    left: -10px;
    background: radial-gradient(circle at 0 0, transparent 10px, #2a403c 10.500px);
}

.tab-active::after {
    right: -10px;
    background: radial-gradient(circle at 100% 0, transparent 10px, #2a403c 10.500px);
}

.tab-new {
    width: 44px;
    display: flex;
    align-items: center;
    justify-content: center;
}

.win-controls {
    margin-left: auto;
    display: flex;
    align-items: center;
    gap: 41px;
    padding: 0 21px 2px 0;
}

/* toolbar */
.toolbar {
    height: 101px;
    flex: none;
    background-color: #2a403c;
    border-radius: 10px 10px 0 0;
    border-bottom: 1px solid #3d4a48;
    color: #a5bab5;
}

.nav-row {
    height: 50px;
    padding: 8px 0 0 5px;
    display: flex;
    align-items: center;
}

.tool {
    width: 45px;
    flex: none;
    display: flex;
    align-items: center;
    justify-content: center;
}

.tool svg {
    display: block;
}

.tool-off {
    color: #6a7f7a;
}

.tool-first {
    margin-left: 9.500px;
}

.tool-sep {
    width: 2px;
    height: 24px;
    margin: 0 11px;
    background-color: #47605b;
}

.tool-sep-last {
    margin: 0 12px 0 9px;
}

.tool-dl {
    width: 44px;
    color: #6fd8c8;
}

.glyph-a {
    font: 600 13px "Open Sans", sans-serif;
    fill: #fff;
}

.glyph-j {
    font: 10px "Noto Sans CJK JP", sans-serif;
    fill: #4a5055;
}

.glyph-g {
    font: 700 10px "Liberation Sans", sans-serif;
    fill: #2a403c;
}

.glyph-t {
    font: 10px "Noto Sans CJK SC", sans-serif;
    fill: #a5bab5;
}

.glyph-inv {
    font: 700 10px "Liberation Sans", sans-serif;
    fill: #f2f2f2;
}

.avatar {
    width: 25px;
    height: 25px;
    border-radius: 50%;
    background-color: #0b57a0;
    color: #e8f0ee;
    font-size: 13px;
    display: flex;
    align-items: center;
    justify-content: center;
}

.address {
    width: 1125px;
    height: 42px;
    margin-left: 10px;
    flex: none;
    border-radius: 21px;
    background-color: #102927;
    display: flex;
    align-items: center;
    padding-left: 6px;
}

.site-info {
    width: 30px;
    height: 30px;
    border-radius: 50%;
    background-color: #2a403c;
    display: flex;
    align-items: center;
    justify-content: center;
}

.url {
    margin-left: 10px;
    font-size: 17px;
    color: #f1f6f5;
}

.url-path {
    color: #c6d4d0;
}

.address-icons {
    margin-left: auto;
    padding-right: 18px;
    display: flex;
    gap: 16px;
    color: #b4c6c2;
}

.bookmarks {
    height: 50px;
    padding-left: 22px;
    display: flex;
    align-items: center;
    font-size: 14px;
    color: #c7d4d1;
}

.apps-btn {
    display: flex;
    margin-right: 19px;
    color: #a5bab5;
}

.bm-sep {
    width: 2px;
    height: 22px;
    margin-right: 17px;
    background-color: #47605b;
}

.bm {
    display: flex;
    align-items: center;
    gap: 7px;
    margin-right: 21px;
    white-space: nowrap;
}

.bm-long {
    width: 172px;
}

.bm-more {
    margin-left: auto;
    display: flex;
    margin-right: 22px;
}

.bm-sep-end {
    margin-right: 20px;
}

.bm-all {
    gap: 10px;
    margin-right: 19px;
}

.bm-all .fav {
    color: #c7d4d1;
}

/* page */
.viewport {
    flex: 1;
    min-height: 0;
    display: flex;
}

.site {
    flex: 1;
    min-width: 0;
}

.site-header {
    height: 80px;
    padding: 0 28px 0 20px;
    display: flex;
    align-items: center;
    justify-content: space-between;
}

.logo {
    display: inline-block;
    margin-right: -21px;
    font-family: "Liberation Serif", serif;
    font-size: 33px;
    font-weight: 700;
    color: #111827;
    transform: scaleX(0.86);
    transform-origin: left center;
}

.site-nav {
    display: flex;
    gap: 40px;
    margin-right: 5px;
    font-family: Inter, sans-serif;
    font-size: 17.500px;
    font-weight: 500;
    color: #1f2937;
}

.site-icons {
    display: flex;
    gap: 35px;
}

.site-icons svg {
    width: 25px;
    height: 25px;
    fill: none;
    stroke: #374151;
    stroke-width: 2;
    stroke-linejoin: round;
    stroke-linecap: round;
}

.login-card {
    width: 560px;
    height: 563px;
    margin: 94px auto 0;
    padding: 40px;
    border-radius: 12px;
    background-color: #fff;
    box-shadow: 0 2px 5px rgba(0, 0, 0, 0.035);
    font-family: Inter, sans-serif;
    text-align: center;
}

.login-title {
    margin: 0;
    font-family: "Liberation Serif", serif;
    font-size: 34px;
    line-height: 40px;
    font-weight: 400;
    color: #111827;
    transform: scaleX(0.945);
}

.login-sub {
    margin: 10px 0 31px;
    font-size: 20px;
    line-height: 28px;
    color: #4b5563;
}

.field-label {
    display: block;
    margin-bottom: 5px;
    font-size: 17.500px;
    line-height: 25px;
    font-weight: 500;
    color: #374151;
    text-align: left;
}

.field-input {
    display: block;
    width: 100%;
    height: 52px;
    padding: 0 15px;
    border: 1.250px solid #d1d5db;
    border-radius: 7.500px;
    font-family: Inter, sans-serif;
    font-size: 20px;
    outline: none;
}

.field-input::placeholder {
    color: #9ca3af;
    opacity: 1;
}

.label-row {
    display: flex;
    justify-content: space-between;
    margin-top: 20px;
}

.gold-link {
    font-size: 17.500px;
    line-height: 25px;
    color: #d4af37;
}

.signin-btn {
    display: block;
    width: 100%;
    height: 50px;
    margin-top: 30px;
    border: none;
    border-radius: 7.500px;
    background-color: #d4af37;
    color: #fff;
    font-family: Inter, sans-serif;
    font-size: 20px;
    font-weight: 600;
}

.divider {
    margin-top: 30px;
    display: flex;
    align-items: center;
    gap: 11px;
    font-size: 17.500px;
    line-height: 25px;
    color: #6b7280;
}

.divider::before,
.divider::after {
    content: "";
    flex: 1;
    height: 1.250px;
    background-color: #d1d5db;
}

.signup-line {
    margin: 30px 0 0;
    font-size: 17.500px;
    line-height: 25px;
    color: #4b5563;
}

.scrollbar {
    width: 19px;
    flex: none;
    display: flex;
    flex-direction: column;
    align-items: center;
    background-color: #2c2c2c;
    padding-top: 2px;
}

.scroll-thumb {
    width: 12px;
    height: 535px;
    margin-top: 6px;
    border-radius: 6px;
    background-color: #9f9f9f;
}

.scroll-down {
    margin-top: auto;
}

/* taskbar */
.taskbar {
    height: 60px;
    flex: none;
    display: flex;
    align-items: center;
    background: linear-gradient(90deg, #1e1d25 0%, #221c22 45%, #2c1c1b 100%);
    border-top: 1px solid #3a3838;
    color: #fff;
    font-family: "Open Sans", "Noto Sans", sans-serif;
}

.weather {
    width: 446px;
    flex: none;
    display: flex;
    align-items: center;
    padding-left: 23px;
}

.weather-icon {
    position: relative;
    width: 36px;
    height: 36px;
    display: block;
}

.weather-badge {
    position: absolute;
    left: 15px;
    top: -1px;
    width: 20px;
    height: 20px;
    border-radius: 50%;
    background-color: #f79aa2;
    color: #1a1a1a;
    font-size: 14px;
    text-align: center;
    line-height: 20px;
}

.weather-text {
    margin-left: 5px;
    display: flex;
    flex-direction: column;
    font-size: 14.500px;
    line-height: 20px;
}

.weather-desc {
    color: #d6d6d8;
}

.start {
    flex: none;
}

.task-search {
    width: 275px;
    height: 40px;
    margin-left: 17px;
    flex: none;
    border-radius: 20px;
    background-color: #45414a;
    border: 1px solid #55525a;
    display: flex;
    align-items: center;
    gap: 10px;
    padding-left: 13px;
    font-size: 16px;
    color: #e4e4e6;
}

.task-apps {
    margin-left: 2.500px;
    display: flex;
}

.app {
    position: relative;
    width: 55px;
    height: 50px;
    display: flex;
    align-items: center;
    justify-content: center;
    padding-bottom: 2px;
}

.app svg {
    width: 32px;
    height: 32px;
}

.app-open::after,
.app-active::after {
    content: "";
    position: absolute;
    bottom: 1px;
    left: 50%;
    width: 8px;
    height: 4px;
    margin-left: -4px;
    border-radius: 2px;
    background-color: #8c8a8a;
}

.app-active::before {
    content: "";
    position: absolute;
    left: 3px;
    right: 3px;
    top: 0;
    bottom: 0;
    border-radius: 5px;
    background-color: #ffffff12;
}

.app-active svg {
    position: relative;
}

.app-active::after {
    width: 20px;
    margin-left: -10px;
    background-color: #dba6e8;
}

.app-badge {
    position: absolute;
    right: 3px;
    top: 0;
    width: 26px;
    height: 26px;
    border-radius: 50%;
    background-color: #d8a0e0;
    color: #1a1a1a;
    font-size: 14px;
    line-height: 26px;
    text-align: center;
}

.tray {
    margin-left: auto;
    padding-right: 24px;
    display: flex;
    align-items: center;
}

.tray-mic {
    margin-left: 22px;
}

.tray-wifi {
    margin-left: 20px;
}

.tray-vol {
    margin-left: 7px;
}

.tray-bat {
    margin-left: 9px;
}

.clock {
    margin-left: 20px;
    display: flex;
    flex-direction: column;
    align-items: flex-end;
    font-size: 14.500px;
    line-height: 20px;
}
```
